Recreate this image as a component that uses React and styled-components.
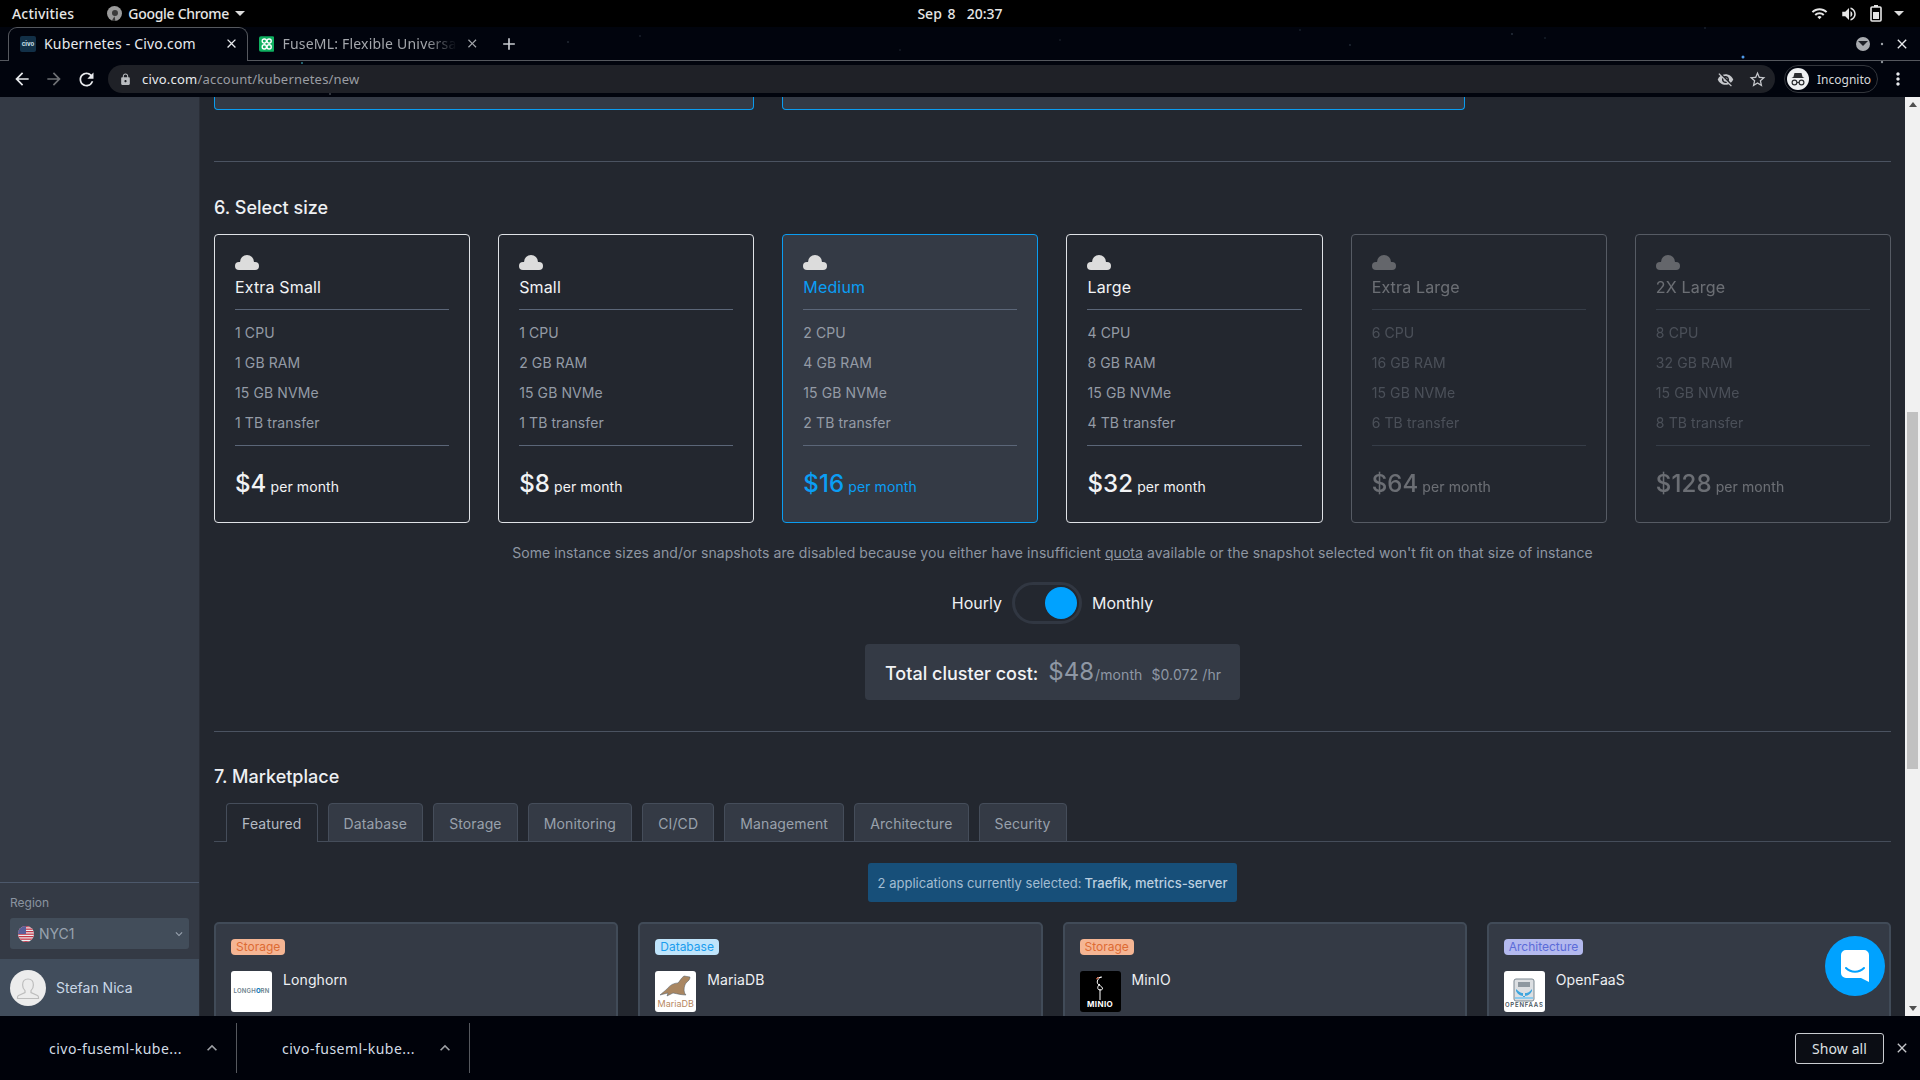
import React from 'react';
import styled, { createGlobalStyle } from 'styled-components';
import {
  MdAdd,
  MdArrowBack,
  MdArrowForward,
  MdClose,
  MdLock,
  MdMoreVert,
  MdRefresh,
  MdStarBorder,
  MdVisibilityOff,
  MdVolumeUp,
  MdWifi,
  MdKeyboardArrowDown,
  MdKeyboardArrowUp,
} from 'react-icons/md';

const GlobalStyle = createGlobalStyle`
  html, body {
    margin: 0;
    padding: 0;
    background: #000;
    overflow: hidden;
  }
  * {
    box-sizing: border-box;
  }
`;

const CHROME_FONT = '"Noto Sans", "Open Sans", sans-serif';
const PAGE_FONT = 'Inter, "Liberation Sans", sans-serif';

const Screen = styled.div`
  width: 1920px;
  height: 1080px;
  display: flex;
  flex-direction: column;
  overflow: hidden;
  background: #23272f;
`;

/* desktop top bar */
const TopBar = styled.div`
  height: 27px;
  flex: none;
  background: #000;
  color: #e6e6e6;
  font: 500 14px ${CHROME_FONT};
  display: grid;
  grid-template-columns: 1fr auto 1fr;
  align-items: center;
  padding: 0 12px;
`;

const TopLeft = styled.div`
  display: flex;
  align-items: center;
  letter-spacing: 0.2px;
`;

const AppMenu = styled.div`
  display: flex;
  align-items: center;
  gap: 6px;
  margin-left: 33px;
  letter-spacing: -0.3px;
`;

const Caret = styled.span`
  width: 0;
  height: 0;
  border-left: 5px solid transparent;
  border-right: 5px solid transparent;
  border-top: 5px solid ${p => p.$color || '#dcdcdc'};
`;

const Clock = styled.div`
  word-spacing: 2px;
`;

const Tray = styled.div`
  display: flex;
  align-items: center;
  justify-content: flex-end;
  gap: 12px;
  padding-right: 4px;
  color: #e6e6e6;
`;

/* browser header */
const BrowserHeader = styled.div`
  position: relative;
  flex: none;
  background: #01040d;
`;

const StarLayer = styled.svg`
  position: absolute;
  left: 0;
  top: 0;
  width: 100%;
  height: 100%;
`;

const TabStrip = styled.div`
  position: relative;
  height: 34px;
  display: flex;
  align-items: flex-end;
  padding-left: 8px;
  border-bottom: 1px solid #55585e;
  color: #e8eaed;
  font: 14px ${CHROME_FONT};
`;

const ActiveTab = styled.div`
  width: 240px;
  height: 34px;
  margin-bottom: -1px;
  padding: 0 8px 2px 11px;
  display: flex;
  align-items: center;
  gap: 8px;
  background: #01040d;
  border: 1px solid #55585e;
  border-bottom: 0;
  border-radius: 9px 9px 0 0;
`;

const InactiveTab = styled.div`
  width: 239px;
  height: 33px;
  padding: 0 8px 0 11px;
  display: flex;
  align-items: center;
  gap: 8px;
  color: #a4a7ac;
`;

const TabTitle = styled.span`
  flex: 1;
  white-space: nowrap;
  letter-spacing: 0.2px;
  ${p => p.$fade && `
    -webkit-mask-image: linear-gradient(to right, #000 82%, transparent 100%);
    mask-image: linear-gradient(to right, #000 82%, transparent 100%);
  `}
`;

const Favicon = styled.span`
  width: 16px;
  height: 16px;
  flex: none;
  display: flex;
  align-items: center;
  justify-content: center;
  background: ${p => p.$bg};
  color: #cfe3f0;
  font: 700 6px ${PAGE_FONT};
  border-radius: 2px;
`;

const NewTab = styled.span`
  height: 33px;
  display: flex;
  align-items: center;
  margin-left: 12px;
  color: #c8cbd0;
`;

const StripEnd = styled.div`
  margin-left: auto;
  height: 33px;
  display: flex;
  align-items: center;
  gap: 24px;
  padding-right: 10px;
  color: #e8eaed;
`;

const RoundCaret = styled.span`
  width: 14px;
  height: 14px;
  border-radius: 50%;
  background: #a8abaf;
  display: flex;
  align-items: center;
  justify-content: center;
`;

const Toolbar = styled.div`
  position: relative;
  height: 36px;
  display: flex;
  align-items: center;
  padding: 0 12px;
  color: #e8eaed;
`;

const NavButtons = styled.div`
  width: 96px;
  flex: none;
  display: flex;
  align-items: center;
  gap: 12px;
`;

const NavIcon = styled.span`
  display: flex;
  color: ${p => (p.$muted ? '#6e7074' : '#e8eaed')};
`;

const AddressBar = styled.div`
  flex: 1;
  height: 28px;
  padding: 0 8px 0 11px;
  display: flex;
  align-items: center;
  background: #1f2127;
  border-radius: 14px;
  font: 13px ${CHROME_FONT};
  letter-spacing: 0.2px;
  color: #9a9da3;
`;

const LockIcon = styled.span`
  display: flex;
  color: #b9bcc0;
  margin-right: 10px;
`;

const Host = styled.span`
  color: #e8eaed;
`;

const AddressEnd = styled.div`
  margin-left: auto;
  display: flex;
  align-items: center;
  gap: 14px;
  color: #c5c7cb;
`;

const IncognitoPill = styled.div`
  width: 94px;
  height: 28px;
  margin-left: 9px;
  flex: none;
  display: flex;
  align-items: center;
  gap: 8px;
  padding-left: 2px;
  border: 1px solid #33363c;
  border-radius: 14px;
  font: 12px ${CHROME_FONT};
  color: #d5d7da;
`;

const IncognitoFace = styled.span`
  width: 22px;
  height: 22px;
  flex: none;
  border-radius: 50%;
  background: #eef0f2;
  display: flex;
  align-items: center;
  justify-content: center;
`;

const Kebab = styled.span`
  display: flex;
  margin-left: 10px;
`;

/* page */
const Body = styled.div`
  position: relative;
  flex: 1;
  min-height: 0;
  display: flex;
`;

const Sidebar = styled.aside`
  width: 200px;
  flex: none;
  display: flex;
  flex-direction: column;
  justify-content: flex-end;
  background: #343a45;
  border-right: 1px solid #2a2e37;
  font-family: ${PAGE_FONT};
`;

const RegionBlock = styled.div`
  height: 77px;
  padding: 12px 10px 0 10px;
  border-top: 1px solid #4c586b;
`;

const RegionLabel = styled.div`
  font-size: 12px;
  line-height: 16px;
  color: #8a93a0;
`;

const RegionSelect = styled.div`
  height: 31px;
  margin-top: 7px;
  padding: 0 3px 0 8px;
  display: flex;
  align-items: center;
  gap: 5px;
  background: #424d5a;
  border-radius: 3px;
  font-size: 14px;
  color: #98a2ae;
`;

const SelectChevron = styled.span`
  display: flex;
  margin-left: auto;
  color: #98a2ae;
`;

const UserRow = styled.div`
  height: 57px;
  padding-left: 10px;
  display: flex;
  align-items: center;
  gap: 10px;
  background: #414d5c;
  font-size: 14px;
  color: #c9d7e6;
`;

const Main = styled.main`
  flex: 1;
  min-width: 0;
  overflow: hidden;
  padding: 0 14px;
  font-family: ${PAGE_FONT};
  letter-spacing: 0.1px;
`;

const ClippedRow = styled.div`
  height: 13px;
  display: flex;
  gap: 28px;
`;

const ClippedCard = styled.div`
  width: ${p => p.$width}px;
  background: #343a45;
  border: 1px solid #0a9cf0;
  border-top: 0;
  border-radius: 0 0 4px 4px;
`;

const Divider = styled.div`
  height: 1px;
  background: #4b5361;
  margin-top: ${p => p.$top}px;
`;

const SectionTitle = styled.h2`
  margin: ${p => p.$top}px 0 0;
  font-size: 18px;
  line-height: 24px;
  font-weight: 500;
  letter-spacing: 0;
  color: #eef0f3;
`;

const SizeGrid = styled.div`
  margin-top: 14px;
  display: grid;
  grid-template-columns: repeat(6, 1fr);
  gap: 28px;
`;

const SizeCard = styled.div`
  height: 289px;
  padding: 20px 20px 0;
  border-radius: 4px;
  border: 1px solid ${p => (p.$selected ? '#0a9cf0' : p.$disabled ? '#565b64' : '#dfe2e6')};
  background: ${p => (p.$selected ? '#343a45' : 'transparent')};
`;

const CardInner = styled.div`
  opacity: ${p => (p.$disabled ? 0.35 : 1)};
`;

const CloudIcon = styled.svg`
  display: block;
  width: 24px;
  height: 15px;
  fill: #dcdcdc;
`;

const SizeName = styled.div`
  margin-top: 5px;
  height: 35px;
  padding-bottom: 11px;
  font-size: 16px;
  line-height: 24px;
  letter-spacing: 0.15px;
  color: ${p => (p.$selected ? '#0a9ef5' : '#f2f3f5')};
  border-bottom: 1px solid #5b6678;
`;

const SpecList = styled.div`
  padding: 8px 0 7px;
  border-bottom: 1px solid #5b6678;
`;

const Spec = styled.div`
  font-size: 14px;
  line-height: 30px;
  color: #949ba6;
`;

const Price = styled.div`
  margin-top: 22px;
  line-height: 32px;
  font-size: 14px;
  color: ${p => (p.$selected ? '#0a9ef5' : '#f2f3f5')};
`;

const PriceValue = styled.span`
  font-size: 24px;
  font-weight: 500;
`;

const Notice = styled.p`
  margin: 20px 0 0;
  font-size: 14px;
  line-height: 20px;
  letter-spacing: 0.07px;
  text-align: center;
  color: #8e96a2;
`;

const QuotaLink = styled.span`
  text-decoration: underline;
`;

const BillingRow = styled.div`
  margin-top: 19px;
  height: 42px;
  display: flex;
  align-items: center;
  justify-content: center;
  gap: 10px;
  font-size: 16px;
  letter-spacing: 0;
  color: #eef0f3;
`;

const Toggle = styled.div`
  width: 70px;
  height: 42px;
  padding-right: 2px;
  display: flex;
  justify-content: flex-end;
  align-items: center;
  border: 3px solid #313742;
  border-radius: 21px;
`;

const ToggleKnob = styled.span`
  width: 32px;
  height: 32px;
  border-radius: 50%;
  background: #00a2ff;
`;

const CostWrap = styled.div`
  margin-top: 20px;
  display: flex;
  justify-content: center;
`;

const CostBox = styled.div`
  width: 375px;
  height: 56px;
  padding: 13px 0 0 20px;
  display: flex;
  align-items: baseline;
  background: #343a45;
  border-radius: 4px;
  color: #8e97a4;
  font-size: 14px;
`;

const CostLabel = styled.span`
  font-size: 18px;
  font-weight: 500;
  letter-spacing: 0;
  color: #f2f3f5;
  margin-right: 10px;
`;

const CostValue = styled.span`
  font-size: 24px;
  letter-spacing: 0;
  margin-right: 1px;
`;

const CostHourly = styled.span`
  margin-left: 9px;
`;

const TabBar = styled.div`
  margin-top: 14px;
  height: 39px;
  padding-left: 12px;
  display: flex;
  gap: 10px;
  border-bottom: 1px solid #454d5a;
`;

const MarketTab = styled.div`
  height: 39px;
  padding: 1px 15.1px 0;
  display: flex;
  align-items: center;
  font-size: 14px;
  color: ${p => (p.$active ? '#b4bac3' : '#99a1ac')};
  background: ${p => (p.$active ? '#23272f' : '#343a45')};
  border: 1px solid #454d5a;
  border-bottom: ${p => (p.$active ? '0' : '1px solid #454d5a')};
  border-radius: 4px 4px 0 0;
`;

const AlertWrap = styled.div`
  margin-top: 21px;
  display: flex;
  justify-content: center;
`;

const Alert = styled.div`
  height: 39px;
  padding: 0 10px;
  display: flex;
  align-items: center;
  gap: 3px;
  background: #174f79;
  border-radius: 3px;
  font-size: 13px;
  letter-spacing: 0;
  color: #a3bdd2;
`;

const AlertStrong = styled.span`
  font-weight: 500;
  color: #bcd0e0;
`;

const AppGrid = styled.div`
  margin-top: 20px;
  display: grid;
  grid-template-columns: repeat(4, 1fr);
  gap: 20px;
`;

const AppCard = styled.div`
  height: 160px;
  padding: 15px;
  background: #343a45;
  border: 2px solid #414b58;
  border-radius: 5px;
`;

const Badge = styled.span`
  display: inline-block;
  height: 16px;
  padding: 0 5px;
  border-radius: 4px;
  font-size: 12px;
  letter-spacing: 0;
  line-height: 16px;
  vertical-align: top;
  color: ${p => p.$fg};
  background: ${p => p.$bg};
`;

const AppHead = styled.div`
  margin-top: 12px;
  display: flex;
  gap: 11px;
`;

const AppName = styled.div`
  font-size: 14px;
  line-height: 18px;
  color: #eef0f3;
`;

const LogoBox = styled.div`
  width: 41px;
  height: 41px;
  flex: none;
  display: flex;
  flex-direction: column;
  align-items: center;
  justify-content: ${p => (p.$center ? 'center' : 'flex-end')};
  background: ${p => p.$bg || '#fff'};
  border-radius: 3px;
  overflow: hidden;
`;

const LogoText = styled.span`
  font: ${p => p.$weight || 400} ${p => p.$size}px ${PAGE_FONT};
  letter-spacing: ${p => p.$spacing || 0}px;
  color: ${p => p.$color};
  line-height: 1.1;
  white-space: nowrap;
  margin-bottom: ${p => p.$bottom || 0}px;
`;

const ChatBubble = styled.div`
  position: absolute;
  right: 35px;
  bottom: 20px;
  width: 60px;
  height: 60px;
  display: flex;
  align-items: center;
  justify-content: center;
  background: #00a2ff;
  border-radius: 50%;
`;

const ScrollTrack = styled.div`
  width: 15px;
  flex: none;
  display: flex;
  flex-direction: column;
  align-items: center;
  background: #f1f1f1;
`;

const ScrollArrow = styled.span`
  height: 15px;
  display: flex;
  align-items: center;
  flex: none;
  margin-top: ${p => (p.$down ? 'auto' : '0')};
  &::before {
    content: '';
    border-left: 4px solid transparent;
    border-right: 4px solid transparent;
    border-${p => (p.$down ? 'top' : 'bottom')}: 5px solid #505050;
  }
`;

const ScrollThumb = styled.div`
  width: 11px;
  height: 357px;
  margin-top: 300px;
  background: #c1c1c1;
`;

/* downloads shelf */
const Shelf = styled.div`
  height: 64px;
  flex: none;
  display: flex;
  align-items: center;
  background: #00020a;
  color: #d3dce6;
  font: 14px ${CHROME_FONT};
`;

const ShelfItem = styled.div`
  width: 237px;
  height: 50px;
  padding: 0 14px 0 49px;
  display: flex;
  align-items: center;
  justify-content: space-between;
  border-right: 1px solid #55585e;
  & + & {
    width: 233px;
    padding-left: 45px;
  }
`;

const ShelfName = styled.span`
  white-space: nowrap;
  letter-spacing: 0.5px;
`;

const ShelfChevron = styled.span`
  display: flex;
  color: #9da0a5;
`;

const ShowAll = styled.div`
  margin-left: auto;
  width: 89px;
  height: 31px;
  display: flex;
  align-items: center;
  justify-content: center;
  background: #0b0d14;
  border: 1px solid #c9ccd1;
  border-radius: 3px;
  letter-spacing: 0.1px;
  color: #dfe1e4;
`;

const ShelfClose = styled.span`
  display: flex;
  margin: 0 10px;
  color: #c5c7cb;
`;

const SIZES = [
  { name: 'Extra Small', specs: ['1 CPU', '1 GB RAM', '15 GB NVMe', '1 TB transfer'], price: '$4' },
  { name: 'Small', specs: ['1 CPU', '2 GB RAM', '15 GB NVMe', '1 TB transfer'], price: '$8' },
  { name: 'Medium', specs: ['2 CPU', '4 GB RAM', '15 GB NVMe', '2 TB transfer'], price: '$16', selected: true },
  { name: 'Large', specs: ['4 CPU', '8 GB RAM', '15 GB NVMe', '4 TB transfer'], price: '$32' },
  { name: 'Extra Large', specs: ['6 CPU', '16 GB RAM', '15 GB NVMe', '6 TB transfer'], price: '$64', disabled: true },
  { name: '2X Large', specs: ['8 CPU', '32 GB RAM', '15 GB NVMe', '8 TB transfer'], price: '$128', disabled: true },
];

const TABS = ['Featured', 'Database', 'Storage', 'Monitoring', 'CI/CD', 'Management', 'Architecture', 'Security'];

const STARS = [
  [170, 57, '#3fb6c8', 1.1], [302, 63, '#2f7f8c', 1], [200, 60, '#3a4a55', 1], [568, 42, '#39424f', 0.8],
  [640, 36, '#2c3440', 0.8], [1743, 57, '#4f9ae8', 1.5], [1882, 44, '#9ea3a8', 1.2], [1882, 62, '#8a8f95', 1.2],
  [1300, 30, '#26303c', 0.8], [1512, 34, '#2a3440', 0.9], [1545, 38, '#26303c', 0.8], [1350, 45, '#232c38', 0.9],
  [1705, 28, '#2a3440', 0.8], [900, 50, '#222a36', 0.8], [1060, 40, '#222a36', 0.8], [330, 94, '#6c7076', 0.8],
];

const Cloud = () => (
  <CloudIcon viewBox="0 0 24 15">
    <circle cx="12" cy="7" r="7" />
    <rect x="0" y="7" width="24" height="8" rx="4" />
  </CloudIcon>
);

const ChromeGlyph = () => (
  <svg width="15" height="15" viewBox="0 0 16 16">
    <circle cx="8" cy="8" r="8" fill="#9b9b9b" />
    <circle cx="8.5" cy="7.5" r="3.2" fill="#3a3a3a" />
    <path d="M8 11 L5 16 L9 16 Z" fill="#3a3a3a" />
  </svg>
);

const FuseIcon = () => (
  <svg width="16" height="16" viewBox="0 0 16 16">
    <rect width="16" height="16" rx="2" fill="#0fb060" />
    <circle cx="5.5" cy="5" r="2.2" fill="none" stroke="#fff" strokeWidth="1.4" />
    <circle cx="10.5" cy="5" r="2.2" fill="none" stroke="#fff" strokeWidth="1.4" />
    <circle cx="5.5" cy="11" r="2.2" fill="none" stroke="#fff" strokeWidth="1.4" />
    <circle cx="10.5" cy="11" r="2.2" fill="none" stroke="#fff" strokeWidth="1.4" />
  </svg>
);

const Battery = () => (
  <svg width="12" height="17" viewBox="0 0 12 17">
    <rect x="4" y="0" width="4" height="2" fill="#e6e6e6" />
    <rect x="1" y="2" width="10" height="14" rx="1" fill="none" stroke="#e6e6e6" strokeWidth="1.6" />
    <rect x="3" y="7" width="6" height="7" fill="#e6e6e6" />
  </svg>
);

const IncognitoGlyph = () => (
  <svg width="18" height="18" viewBox="0 0 18 18" fill="#2b2d31">
    <path d="M5.5 3 L12.5 3 L13.6 7 L15.5 8 L2.5 8 L4.4 7 Z" />
    <circle cx="5.5" cy="12.5" r="2.4" fill="none" stroke="#2b2d31" strokeWidth="1.2" />
    <circle cx="12.5" cy="12.5" r="2.4" fill="none" stroke="#2b2d31" strokeWidth="1.2" />
    <rect x="7.8" y="12" width="2.4" height="1" />
  </svg>
);

const FlagUs = () => (
  <svg width="16" height="16" viewBox="0 0 16 16">
    <defs>
      <clipPath id="flag-round">
        <circle cx="8" cy="8" r="8" />
      </clipPath>
    </defs>
    <g clipPath="url(#flag-round)">
      <rect width="16" height="16" fill="#eef0f3" />
      {[0, 2.5, 5, 7.5, 10, 12.5, 15].map(y => (
        <rect key={y} x="0" y={y} width="16" height="1.3" fill="#c4384a" />
      ))}
      <rect width="8" height="8" fill="#5a5f9a" />
    </g>
  </svg>
);

const Avatar = () => (
  <svg width="36" height="36" viewBox="0 0 36 36">
    <circle cx="18" cy="18" r="18" fill="#ececec" />
    <path
      d="M18 9c-3.4 0-5.4 2.6-5.4 6 0 2.4 1 4.4 2.4 5.6v2L8.5 25.5c-.8.4-1 1-1 2v1h21v-1c0-1-.2-1.6-1-2L21 22.6v-2c1.4-1.2 2.4-3.2 2.4-5.6 0-3.4-2-6-5.4-6z"
      fill="none"
      stroke="#bdbdbd"
      strokeWidth="1.2"
    />
  </svg>
);

const LonghornLogo = () => (
  <LogoBox $center>
    <LogoText $size={6} $weight={600} $color="#6d7f8c" $spacing={0.2}>
      LONGH
      <LogoText as="span" $size={6} $weight={800} $color="#0f7fc0">
        O
      </LogoText>
      RN
    </LogoText>
  </LogoBox>
);

const MariaLogo = () => (
  <LogoBox>
    <svg width="33" height="24" viewBox="0 0 33 24">
      <path
        d="M31 2 L25 1 C22 3 21 6 19 8 C15 8 11 10 8 14 C6 16 3 18 1 20 L9 18 L8 21 L14 18 C19 19 23 20 27 20 C24 17 25 11 27 8 C29 6 31 5 31 2 Z"
        fill="#a98661"
        stroke="#4b5a68"
        strokeWidth="0.5"
      />
    </svg>
    <LogoText $size={9} $color="#b8885f" $bottom={3}>
      MariaDB
    </LogoText>
  </LogoBox>
);

const MinioLogo = () => (
  <LogoBox $bg="#000">
    <svg width="14" height="24" viewBox="0 0 14 24" fill="none" stroke="#fff" strokeWidth="1">
      <path d="M4 2 L9 1 M8 1 C4 3 3 7 6 9 C10 11 11 14 7 14 C4 14 4 10 7 8 M7 13 L7 24" />
      <path d="M3 3 L6 1.5" stroke="#d8552f" />
    </svg>
    <LogoText $size={8} $weight={700} $color="#fff" $spacing={0.4} $bottom={3}>
      MINIO
    </LogoText>
  </LogoBox>
);

const FaasLogo = () => (
  <LogoBox>
    <svg width="22" height="24" viewBox="0 0 22 24">
      <rect x="1" y="1" width="20" height="22" rx="2" fill="#dcdfe2" stroke="#7b8790" strokeWidth="1" />
      <rect x="5" y="4" width="12" height="5" fill="#8e98a0" />
      <path d="M3 11 C7 15 9 15 10 15 L10 19 L12 19 L12 15 C14 15 16 15 19 11 L19 13 C17 17 14 18 11 18 C8 18 5 17 3 13 Z" fill="#3ea6de" />
      <rect x="2" y="19" width="18" height="2" fill="#8ccbee" />
    </svg>
    <LogoText $size={6} $weight={600} $color="#4a5560" $spacing={0.8} $bottom={3}>
      OPENFAAS
    </LogoText>
  </LogoBox>
);

const APPS = [
  { name: 'Longhorn', badge: 'Storage', fg: '#dd6b33', bg: '#f5b593', Logo: LonghornLogo },
  { name: 'MariaDB', badge: 'Database', fg: '#1a9dee', bg: '#bfe4fb', Logo: MariaLogo },
  { name: 'MinIO', badge: 'Storage', fg: '#dd6b33', bg: '#f5b593', Logo: MinioLogo },
  { name: 'OpenFaaS', badge: 'Architecture', fg: '#5b6bd8', bg: '#b3b9ee', Logo: FaasLogo },
];

export default function App() {
  return (
    <Screen>
      <GlobalStyle />
      <TopBar>
        <TopLeft>
          Activities
          <AppMenu>
            <ChromeGlyph />
            Google Chrome
            <Caret />
          </AppMenu>
        </TopLeft>
        <Clock>Sep 8 &nbsp;20:37</Clock>
        <Tray>
          <MdWifi size={17} />
          <MdVolumeUp size={18} />
          <Battery />
          <Caret />
        </Tray>
      </TopBar>

      <BrowserHeader>
        <StarLayer viewBox="0 27 1920 70" preserveAspectRatio="none">
          {STARS.map(([x, y, color, r]) => (
            <circle key={`${x}-${y}`} cx={x} cy={y} r={r} fill={color} />
          ))}
        </StarLayer>
        <TabStrip>
          <ActiveTab>
            <Favicon $bg="#123047">civo</Favicon>
            <TabTitle>Kubernetes - Civo.com</TabTitle>
            <MdClose size={15} />
          </ActiveTab>
          <InactiveTab>
            <FuseIcon />
            <TabTitle $fade>FuseML: Flexible Universa</TabTitle>
            <MdClose size={15} />
          </InactiveTab>
          <NewTab>
            <MdAdd size={20} />
          </NewTab>
          <StripEnd>
            <RoundCaret>
              <Caret $color="#1d2026" />
            </RoundCaret>
            <MdClose size={16} />
          </StripEnd>
        </TabStrip>
        <Toolbar>
          <NavButtons>
            <NavIcon>
              <MdArrowBack size={20} />
            </NavIcon>
            <NavIcon $muted>
              <MdArrowForward size={20} />
            </NavIcon>
            <NavIcon>
              <MdRefresh size={21} />
            </NavIcon>
          </NavButtons>
          <AddressBar>
            <LockIcon>
              <MdLock size={13} />
            </LockIcon>
            <Host>civo.com</Host>/account/kubernetes/new
            <AddressEnd>
              <MdVisibilityOff size={17} />
              <MdStarBorder size={19} />
            </AddressEnd>
          </AddressBar>
          <IncognitoPill>
            <IncognitoFace>
              <IncognitoGlyph />
            </IncognitoFace>
            Incognito
          </IncognitoPill>
          <Kebab>
            <MdMoreVert size={20} />
          </Kebab>
        </Toolbar>
      </BrowserHeader>

      <Body>
        <Sidebar>
          <RegionBlock>
            <RegionLabel>Region</RegionLabel>
            <RegionSelect>
              <FlagUs />
              NYC1
              <SelectChevron>
                <MdKeyboardArrowDown size={14} />
              </SelectChevron>
            </RegionSelect>
          </RegionBlock>
          <UserRow>
            <Avatar />
            Stefan Nica
          </UserRow>
        </Sidebar>

        <Main>
          <ClippedRow>
            <ClippedCard $width={540} />
            <ClippedCard $width={683} />
          </ClippedRow>
          <Divider $top={51} />

          <SectionTitle $top={34}>6. Select size</SectionTitle>
          <SizeGrid>
            {SIZES.map(size => (
              <SizeCard key={size.name} $selected={size.selected} $disabled={size.disabled}>
                <CardInner $disabled={size.disabled}>
                  <Cloud />
                  <SizeName $selected={size.selected}>{size.name}</SizeName>
                  <SpecList>
                    {size.specs.map(spec => (
                      <Spec key={spec}>{spec}</Spec>
                    ))}
                  </SpecList>
                  <Price $selected={size.selected}>
                    <PriceValue>{size.price}</PriceValue> per month
                  </Price>
                </CardInner>
              </SizeCard>
            ))}
          </SizeGrid>

          <Notice>
            Some instance sizes and/or snapshots are disabled because you either have insufficient{' '}
            <QuotaLink>quota</QuotaLink> available or the snapshot selected won't fit on that size of instance
          </Notice>

          <BillingRow>
            Hourly
            <Toggle>
              <ToggleKnob />
            </Toggle>
            Monthly
          </BillingRow>

          <CostWrap>
            <CostBox>
              <CostLabel>Total cluster cost:</CostLabel>
              <CostValue>$48</CostValue>/month
              <CostHourly>$0.072 /hr</CostHourly>
            </CostBox>
          </CostWrap>

          <Divider $top={31} />

          <SectionTitle $top={33}>7. Marketplace</SectionTitle>
          <TabBar>
            {TABS.map((tab, i) => (
              <MarketTab key={tab} $active={i === 0}>
                {tab}
              </MarketTab>
            ))}
          </TabBar>

          <AlertWrap>
            <Alert>
              2 applications currently selected: <AlertStrong>Traefik, metrics-server</AlertStrong>
            </Alert>
          </AlertWrap>

          <AppGrid>
            {APPS.map(({ name, badge, fg, bg, Logo }) => (
              <AppCard key={name}>
                <Badge $fg={fg} $bg={bg}>
                  {badge}
                </Badge>
                <AppHead>
                  <Logo />
                  <AppName>{name}</AppName>
                </AppHead>
              </AppCard>
            ))}
          </AppGrid>
        </Main>

        <ScrollTrack>
          <ScrollArrow />
          <ScrollThumb />
          <ScrollArrow $down />
        </ScrollTrack>

        <ChatBubble>
          <svg width="28" height="32" viewBox="0 0 28 32">
            <path d="M5 0 H23 A5 5 0 0 1 28 5 V32 L20 28 H5 A5 5 0 0 1 0 23 V5 A5 5 0 0 1 5 0 Z" fill="#fff" />
            <path d="M5 18 C10 23 18 23 23 18" fill="none" stroke="#00a2ff" strokeWidth="2" strokeLinecap="round" />
          </svg>
        </ChatBubble>
      </Body>

      <Shelf>
        <ShelfItem>
          <ShelfName>civo-fuseml-kube...</ShelfName>
          <ShelfChevron>
            <MdKeyboardArrowUp size={20} />
          </ShelfChevron>
        </ShelfItem>
        <ShelfItem>
          <ShelfName>civo-fuseml-kube...</ShelfName>
          <ShelfChevron>
            <MdKeyboardArrowUp size={20} />
          </ShelfChevron>
        </ShelfItem>
        <ShowAll>Show all</ShowAll>
        <ShelfClose>
          <MdClose size={16} />
        </ShelfClose>
      </Shelf>
    </Screen>
  );
}
